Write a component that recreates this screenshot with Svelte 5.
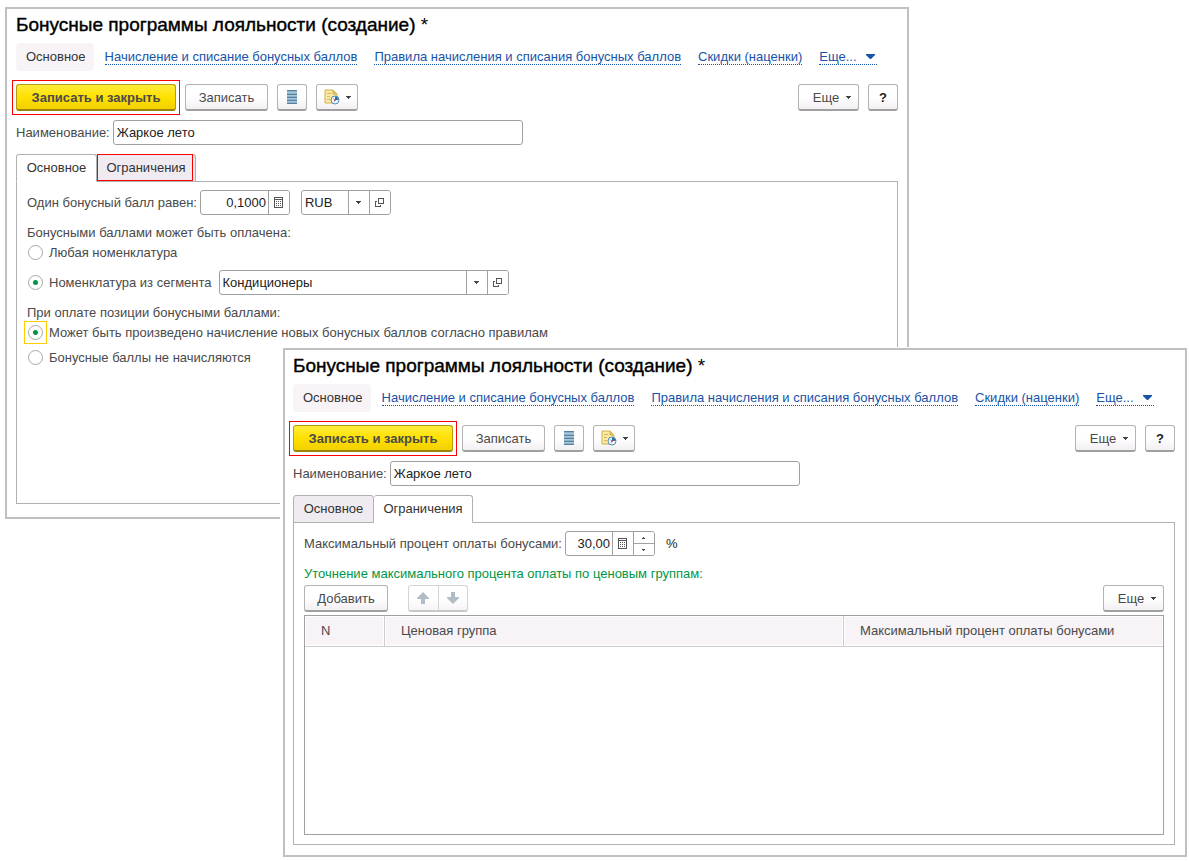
<script lang="ts">
  let firstName = $state('Жаркое лето');
  let secondName = $state('Жаркое лето');
  let rate = $state('0,1000');
  let currency = $state('RUB');
  let segment = $state('Кондиционеры');
  let percent = $state('30,00');
  let payable = $state('segment');
  let accrual = $state('allowed');

  const links = [
    'Начисление и списание бонусных баллов',
    'Правила начисления и списания бонусных баллов',
    'Скидки (наценки)',
  ];
</script>

{#snippet caret()}
  <svg class="caret" width="5" height="3" viewBox="0 0 5 3" aria-hidden="true"><path d="M0 0h5v1H4v1H3v1H2V2H1V1H0z" fill="#444" /></svg>
{/snippet}

{#snippet calculator()}
  <svg width="9" height="11" viewBox="0 0 9 11" shape-rendering="crispEdges" aria-hidden="true">
    <path d="M0 0h9v11H0zM1 1v1h7V1zM1 3v7h7V3z" fill="#555" fill-rule="evenodd" />
    <path d="M2 4h1v1H2zM4 4h1v1H4zM6 4h1v1H6zM2 6h1v1H2zM4 6h1v1H4zM6 6h1v1H6zM2 8h1v1H2zM4 8h1v1H4zM6 8h1v1H6z" fill="#555" />
  </svg>
{/snippet}

{#snippet openIcon()}
  <svg width="9" height="9" viewBox="0 0 9 9" shape-rendering="crispEdges" aria-hidden="true">
    <path d="M3 0h6v6H3zM4 1v4h4V1z" fill="#555" fill-rule="evenodd" />
    <path d="M0 3h2v1H1v4h4V7h1v2H0z" fill="#555" />
  </svg>
{/snippet}

{#snippet header()}
  <h1>Бонусные программы лояльности (создание) <span>*</span></h1>
  <nav>
    <a class="current" href="#main">Основное</a>
    {#each links as link}
      <a class="link" href="#section">{link}</a>
    {/each}
    <a class="link more" href="#more">Еще...
      <svg width="9" height="5" viewBox="0 0 9 5" aria-hidden="true"><path d="M0 0h9v1L5 5H4L0 1z" fill="#1753a8" /></svg>
    </a>
  </nav>
  <div class="toolbar">
    <div class="marked"><button class="btn primary">Записать и закрыть</button></div>
    <button class="btn save">Записать</button>
    <button class="btn square" aria-label="Список">
      <svg width="10" height="14" viewBox="0 0 10 14" shape-rendering="crispEdges" aria-hidden="true">
        <rect width="10" height="14" fill="#8fb0c9" />
        <path d="M0 0h10v1H0zM0 4h10v1H0zM0 7h10v1H0zM0 10h10v1H0zM0 13h10v1H0z" fill="#54829f" />
        <path d="M0 2h10v1H0zM0 5h10v1H0zM0 8h10v1H0zM0 11h10v1H0z" fill="#a9c5d8" />
      </svg>
    </button>
    <button class="btn report" aria-label="Отчеты">
      <svg width="16" height="16" viewBox="0 0 16 16" aria-hidden="true">
        <path d="M1 1h8l4 4v9H1z" fill="#fbe9a4" stroke="#d3b04c" />
        <path d="M9 1v4h4z" fill="#e4c66a" stroke="#d3b04c" />
        <path d="M3 4.500h4M3 7.500h3M8 7.500h3M3 10.500h3" stroke="#d5b75e" />
        <circle cx="11" cy="11" r="4" fill="#f4faff" stroke="#508bbd" />
        <path d="M11 11V7.500A3.500 3.500 0 0 1 14.500 11z" fill="#2e6fa9" />
        <path d="M8.500 9l2.500 2-1 2.500" fill="none" stroke="#9ac0dd" />
        <circle cx="11" cy="11" r="1" fill="#c9493b" />
      </svg>
      {@render caret()}
    </button>
    <span class="spacer"></span>
    <button class="btn menu">Еще {@render caret()}</button>
    <button class="btn square help">?</button>
  </div>
{/snippet}

<main>
  <section class="window first">
    {@render header()}
    <label class="name">Наименование: <input class="box" bind:value={firstName} /></label>
    <div class="tabs" role="tablist">
      <button class="tab active" role="tab" aria-selected="true">Основное</button>
      <button class="tab highlighted" role="tab" aria-selected="false">Ограничения</button>
    </div>
    <div class="panel">
      <div class="row">
        <label for="rate">Один бонусный балл равен:</label>
        <div class="field short">
          <input id="rate" class="number" bind:value={rate} />
          <button aria-label="Калькулятор">{@render calculator()}</button>
        </div>
        <div class="field short currency">
          <input aria-label="Валюта" bind:value={currency} />
          <button aria-label="Выбрать">{@render caret()}</button>
          <button aria-label="Открыть">{@render openIcon()}</button>
        </div>
      </div>
      <p>Бонусными баллами может быть оплачена:</p>
      <div class="radio">
        <label><input type="radio" name="payable" value="any" bind:group={payable} />Любая номенклатура</label>
      </div>
      <div class="row radio">
        <label><input type="radio" name="payable" value="segment" bind:group={payable} />Номенклатура из сегмента</label>
        <div class="field segment">
          <input aria-label="Сегмент" bind:value={segment} />
          <button aria-label="Выбрать">{@render caret()}</button>
          <button aria-label="Открыть">{@render openIcon()}</button>
        </div>
      </div>
      <p>При оплате позиции бонусными баллами:</p>
      <div class="radio">
        <label class="focused"><input type="radio" name="accrual" value="allowed" bind:group={accrual} />Может быть произведено начисление новых бонусных баллов согласно правилам</label>
      </div>
      <div class="radio last">
        <label><input type="radio" name="accrual" value="none" bind:group={accrual} />Бонусные баллы не начисляются</label>
      </div>
    </div>
  </section>

  <section class="window second">
    {@render header()}
    <label class="name">Наименование: <input class="box" bind:value={secondName} /></label>
    <div class="tabs" role="tablist">
      <button class="tab" role="tab" aria-selected="false">Основное</button>
      <button class="tab active" role="tab" aria-selected="true">Ограничения</button>
    </div>
    <div class="panel">
      <div class="row">
        <label for="percent">Максимальный процент оплаты бонусами:</label>
        <div class="field short">
          <input id="percent" class="number" bind:value={percent} />
          <button aria-label="Калькулятор">{@render calculator()}</button>
          <div class="spin">
            <button aria-label="Увеличить"><svg width="3" height="2" viewBox="0 0 3 2" aria-hidden="true"><path d="M1 0h1v1h1v1H0V1h1z" fill="#444" /></svg></button>
            <button aria-label="Уменьшить"><svg width="3" height="2" viewBox="0 0 3 2" aria-hidden="true"><path d="M0 0h3v1H2v1H1V1H0z" fill="#444" /></svg></button>
          </div>
        </div>
        <span class="unit">%</span>
      </div>
      <p class="green">Уточнение максимального процента оплаты по ценовым группам:</p>
      <div class="commands">
        <button class="btn add">Добавить</button>
        <div class="movers">
          <button aria-label="Вверх"><svg width="12" height="12" viewBox="0 0 12 12" aria-hidden="true"><path d="M6 0l6 6v1H8v5H4V7H0V6z" fill="#b1bcc7" /></svg></button>
          <button aria-label="Вниз"><svg width="12" height="12" viewBox="0 0 12 12" aria-hidden="true"><path d="M6 12l6-6V5H8V0H4v5H0v1z" fill="#b1bcc7" /></svg></button>
        </div>
        <span class="spacer"></span>
        <button class="btn menu">Еще {@render caret()}</button>
      </div>
      <div class="grid">
        <table>
          <thead>
            <tr><th class="n">N</th><th>Ценовая группа</th><th class="max">Максимальный процент оплаты бонусами</th></tr>
          </thead>
        </table>
      </div>
    </div>
  </section>
</main>

<style>
  :global(body) {
    background: #fff;
  }
  main {
    display: grid;
    font: 13px/15px "Liberation Sans", Arial, sans-serif;
    color: #4a4a4a;
  }
  main :is(button, input) {
    font: inherit;
    color: inherit;
    box-sizing: border-box;
    margin: 0;
  }
  .window {
    grid-area: 1 / 1;
    align-self: start;
    min-width: 0;
    border: 2px solid #c0c0c0;
    background: #fff;
  }
  .first {
    margin: 7px 280px 0 5px;
    padding: 5px 9px 13px;
  }
  .second {
    margin: 348px 2px 0 283px;
    padding: 5px 10px 10px 8px;
    box-shadow: -3px -1px 0 #fff;
  }
  h1 {
    margin: 0;
    font-size: 19px;
    line-height: 22px;
    font-weight: 400;
    color: #000;
    -webkit-text-stroke: 0.400px #000;
    white-space: nowrap;
  }
  h1 span {
    -webkit-text-stroke: 0;
  }
  nav {
    display: flex;
    align-items: center;
    gap: 17px;
    height: 28px;
    margin-top: 7px;
    white-space: nowrap;
  }
  nav a {
    text-decoration: none;
  }
  .current {
    padding: 0 8px 0 10px;
    margin-right: -6px;
    line-height: 28px;
    border-radius: 4px;
    background: #f7f3f7;
    color: #333;
  }
  .link {
    padding-top: 1px;
    color: #1753a8;
    border-bottom: 1px dotted #1753a8;
    line-height: 14px;
  }
  .more svg {
    margin: 0 2px 2px 6px;
  }
  .toolbar {
    display: flex;
    gap: 9px;
    height: 27px;
    margin-top: 13px;
  }
  .spacer {
    flex: 1;
  }
  .btn {
    display: flex;
    align-items: center;
    justify-content: center;
    height: 27px;
    padding: 0;
    border: 1px solid #b4b4b4;
    border-bottom: 2px solid #a0a0a0;
    border-radius: 3px;
    background: linear-gradient(#fff 50%, #f3eff3);
    white-space: nowrap;
  }
  .marked {
    outline: 1px solid #f00;
    outline-offset: 3px;
  }
  main .primary {
    width: 160px;
    border-color: #b39c10 #b39c10 #98840a;
    background: linear-gradient(#ffec3d, #ffe100 50%, #f2d000);
    font-weight: 700;
  }
  .save {
    width: 83px;
  }
  .square {
    width: 30px;
  }
  .report {
    width: 42px;
    gap: 6px;
  }
  .menu {
    width: 61px;
    gap: 7px;
    padding-left: 7px;
  }
  main .help {
    font-weight: 700;
    color: #222;
  }
  .name {
    display: flex;
    align-items: center;
    gap: 3px;
    margin-top: 9px;
  }
  main .box {
    width: 410px;
    height: 25px;
    padding: 0 3px;
    border: 1px solid #a0a0a0;
    border-radius: 3px;
    color: #222;
  }
  .tabs {
    display: flex;
    height: 28px;
    margin-top: 9px;
    margin-bottom: -1px;
  }
  main .tab {
    position: relative;
    width: 81px;
    padding: 0 0 2px;
    border: 1px solid #b0b0b0;
    border-radius: 3px 3px 0 0;
    background: #f0ebf0;
    color: #333;
  }
  main .tab + .tab {
    width: 99px;
    border-left: 0;
  }
  main .tab.active {
    border-bottom-color: #fff;
    background: #fff;
  }
  .highlighted::after {
    content: '';
    position: absolute;
    inset: -1px 2px 0 0;
    border: 1px solid #f00;
  }
  .panel {
    box-sizing: border-box;
    height: 323px;
    padding: 8px 10px;
    border: 1px solid #b0b0b0;
  }
  .row {
    display: flex;
    align-items: center;
    height: 25px;
    gap: 3px;
  }
  p {
    margin: 10px 0 5px;
  }
  .field {
    display: flex;
    box-sizing: border-box;
    height: 25px;
    border: 1px solid #a0a0a0;
    border-radius: 3px;
    overflow: hidden;
  }
  .short {
    width: 90px;
  }
  .currency {
    margin-left: 8px;
  }
  .segment {
    width: 290px;
    margin-left: 4px;
  }
  .field input {
    flex: 1;
    min-width: 0;
    padding: 0 3px;
    border: 0;
    background: none;
    color: #222;
  }
  .field .number {
    padding: 0 2px;
    text-align: right;
  }
  .field button {
    display: grid;
    place-items: center;
    width: 21px;
    padding: 0;
    border: 0;
    border-left: 1px solid #a0a0a0;
    background: #fff;
  }
  .spin {
    display: grid;
    grid-template-rows: 12px 11px;
  }
  .spin button:first-child {
    border-bottom: 1px solid #a0a0a0;
  }
  .unit {
    margin-left: 8px;
    color: #222;
  }
  .radio label {
    position: relative;
    display: flex;
    align-items: center;
    gap: 6px;
    padding-left: 1px;
  }
  .radio input[type='radio'] {
    appearance: none;
    width: 15px;
    height: 15px;
    border: 1px solid #a8a8a8;
    border-radius: 50%;
  }
  .radio input[type='radio']:checked {
    background: radial-gradient(circle, #009646 2px, #fff 3px);
  }
  .focused::before {
    content: '';
    position: absolute;
    top: -4px;
    left: -3px;
    box-sizing: border-box;
    width: 23px;
    height: 23px;
    border: 1px solid #fc0;
  }
  .radio + .row,
  .last {
    margin-top: 10px;
  }
  p.green {
    margin: 10px 0 4px;
    color: #009646;
  }
  .commands {
    display: flex;
    height: 27px;
  }
  .add {
    width: 84px;
    margin-right: 20px;
  }
  .movers {
    display: flex;
    box-sizing: border-box;
    width: 60px;
    border: 1px solid #d4d4d4;
    border-bottom: 2px solid #c8c8c8;
    border-radius: 3px;
    background: linear-gradient(#fff 50%, #f7f4f7);
  }
  .movers button {
    flex: 1;
    display: grid;
    place-items: center;
    padding: 0;
    border: 0;
    background: none;
  }
  .movers button + button {
    border-left: 1px solid #d4d4d4;
  }
  .grid {
    box-sizing: border-box;
    height: 220px;
    margin-top: 3px;
    border: 1px solid #a0a0a0;
  }
  table {
    width: 100%;
    table-layout: fixed;
    border-collapse: separate;
    border-spacing: 0;
  }
  th {
    height: 28px;
    padding: 0 16px 2px;
    border-right: 1px solid #ccc;
    border-bottom: 1px solid #ccc;
    box-shadow: inset 0 0 0 1px #fff;
    background: #f7f3f7;
    font-weight: 400;
    text-align: left;
    white-space: nowrap;
  }
  th:last-child {
    border-right: 0;
  }
  .n {
    width: 47px;
  }
  .max {
    width: 287px;
  }
</style>
